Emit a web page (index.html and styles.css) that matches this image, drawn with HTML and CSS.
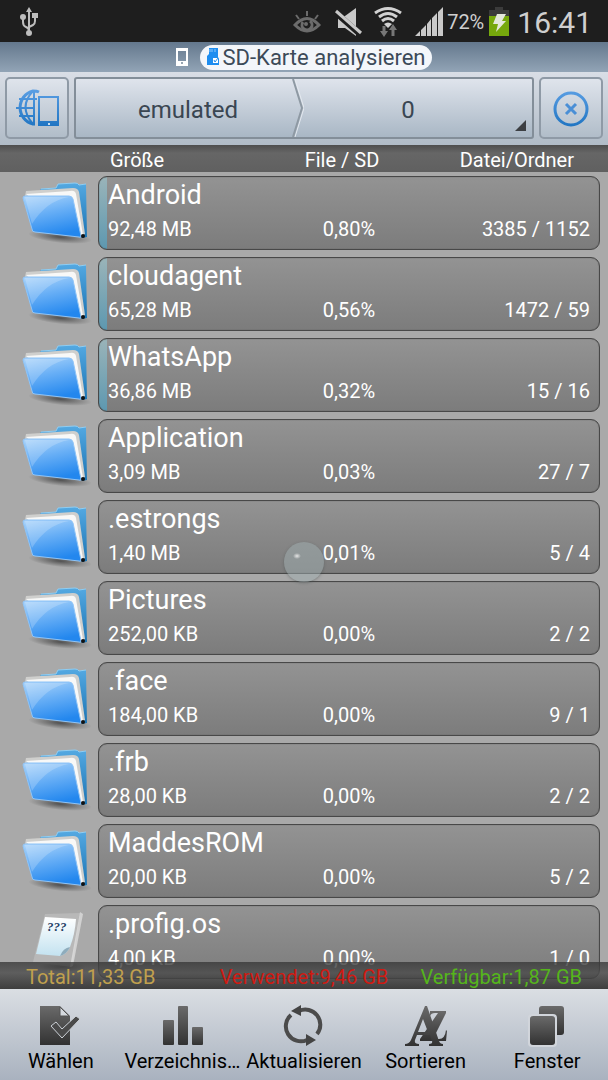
FILE: index.html
```
<!DOCTYPE html>
<html lang="de">

<head>
  <meta charset="UTF-8" />
  <meta name="viewport" content="width=device-width, initial-scale=1.0" />
  <title>SD-Karte analysieren</title>
  <link rel="stylesheet" href="styles.css">
</head>

<body>
  <!-- shared icons and gradients -->
  <svg class="defs" aria-hidden="true">
    <defs>
      <linearGradient id="front" x1="0.1" y1="0" x2="0.4" y2="1">
        <stop offset="0" stop-color="#a9d3fa" />
        <stop offset="0.45" stop-color="#68aff6" />
        <stop offset="1" stop-color="#2387ee" />
      </linearGradient>
      <linearGradient id="back" x1="0" y1="0" x2="0" y2="1">
        <stop offset="0" stop-color="#54a9e2" />
        <stop offset="1" stop-color="#1b74b4" />
      </linearGradient>
      <linearGradient id="dark" x1="0" y1="0" x2="0" y2="1">
        <stop offset="0" stop-color="#6a6a6a" />
        <stop offset="1" stop-color="#323232" />
      </linearGradient>
      <linearGradient id="blue" x1="0" y1="0" x2="0" y2="38" gradientUnits="userSpaceOnUse">
        <stop offset="0" stop-color="#5b9fe4" />
        <stop offset="1" stop-color="#1f74c2" />
      </linearGradient>
      <linearGradient id="page" x1="0" y1="0" x2="0" y2="1">
        <stop offset="0" stop-color="#ffffff" />
        <stop offset="1" stop-color="#c3e2f0" />
      </linearGradient>
      <radialGradient id="shade">
        <stop offset="0" stop-color="#333" stop-opacity="0.75" />
        <stop offset="1" stop-color="#333" stop-opacity="0" />
      </radialGradient>
    </defs>
    <symbol id="folder" viewBox="0 0 70 66">
      <ellipse cx="38" cy="57" rx="32" ry="6" fill="url(#shade)" transform="rotate(6 38 57)" />
      <path d="M18 9 L34 8 L36 4 L53 3 Q56 3 57 5 L64 4 L65 57 L60 58 Z" fill="url(#back)" />
      <path d="M19 9 L34 8 L36 4 L53 3 Q56 3 57 5 L64 4" fill="none" stroke="#8fcdf2" />
      <path d="M3 16 L4 11 L51 8 Q56 8 57 12 L63 54 L59 57 Z" fill="#cfcfcd" />
      <path d="M4 14 L48 11 Q53 10 54 14 L61 55 L56 56 Z" fill="#f8f8f7" />
      <path d="M3 16 L47 16 Q50 16 51 19 L59 56 Q59 58 57 57 L13 52 Q10 52 10 49 L1 18 Q1 16 3 16 Z" fill="url(#front)" stroke="#8fc4f7" />
      <path d="M3 17 L47 17 Q24 21 10 44 Z" fill="#fff" opacity="0.2" />
      <circle cx="61" cy="56" r="2" fill="#111" />
    </symbol>
    <symbol id="unknown" viewBox="0 0 70 66">
      <ellipse cx="40" cy="58" rx="24" ry="5" fill="url(#shade)" />
      <path d="M23 5 L58 4 L50 58 L11 53 Z" fill="#d5d5d5" opacity="0.35" />
      <path d="M58 3 L61 5 L51 57 L48 58 Z" fill="#e2e2e2" opacity="0.7" />
      <path d="M23 8 L54 10 Q53 25 48 38 Q45 45 38 47 L14 45 Z" fill="url(#page)" />
      <path d="M48 38 Q41 39 38 47 Q45 45 48 38 Z" fill="#8eacbc" />
      <text x="25" y="22" class="marks">???</text>
    </symbol>
  </svg>

  <div class="status-bar">
    <svg class="usb" width="20" height="32" viewBox="0 0 20 32" fill="none" stroke="#bdbdbd" stroke-width="2">
      <path d="M11 27 V5 M11 25 Q11 22 8 21 Q5 20 5 16 V11 M11 21 L15 19 Q17 18 17 15 V10" />
      <g fill="#bdbdbd" stroke="none">
        <path d="M11 1 L14 6 H8 Z" />
        <circle cx="5" cy="11" r="3" />
        <path d="M14 7 H20 V12 H14 Z" />
        <circle cx="11" cy="27" r="3" />
      </g>
    </svg>
    <svg width="28" height="32" viewBox="0 0 28 32" fill="none" stroke="#6c6c6c" stroke-width="3">
      <path d="M2 19 Q14 6 26 19 Q14 31 2 19 Z" />
      <path d="M10 16 A5 5 0 1 0 17 15" />
      <circle cx="13" cy="18" r="2" fill="#6c6c6c" stroke="none" />
      <path d="M3 9 L6 13 M14 5 V10 M25 9 L22 13" stroke-width="2" />
    </svg>
    <svg class="mute" width="28" height="32" viewBox="0 0 28 32">
      <path d="M3 10 H10 L21 2 V30 L10 22 H3 Z" fill="#c9c9c9" />
      <path d="M0 6 L26 29" stroke="#1e1e1e" stroke-width="6" />
      <path d="M1 5 L26 27" stroke="#c9c9c9" stroke-width="3" />
    </svg>
    <svg class="wifi" width="30" height="32" viewBox="0 0 30 32" fill="none" stroke="#d2d2d2" stroke-width="3">
      <path d="M2 7 Q15 -2 28 7 M6 11 Q15 4 24 11 M9 15 Q15 10 21 15" />
      <path d="M11 18 Q15 15 19 18 L15 22 Z" fill="#d2d2d2" stroke="none" />
      <path d="M11 20 V27 M20 30 V23" stroke="#777" />
      <path d="M7 25 H15 L11 31 Z M16 24 H24 L20 18 Z" fill="#777" stroke="none" />
    </svg>
    <svg class="signal" width="28" height="32" viewBox="0 0 28 32" fill="#c9c9c9">
      <path d="M0 30 L5 25 V30 Z M6 24 L11 19 V30 H6 Z M12 18 L16 13 V30 H12 Z M17 12 L22 7 V30 H17 Z M23 6 L28 1 V30 H23 Z" />
    </svg>
    <span class="percent">72%</span>
    <svg width="20" height="32" viewBox="0 0 20 32">
      <path d="M6 1 H14 V4 H20 V10 H0 V4 H6 Z" fill="#3b3b3b" />
      <path d="M0 10 H20 V30 H0 Z" fill="#76a80d" />
      <path d="M8 8 H17 L13 15 H17 L7 26 L9 18 H4 Z" fill="#e4e8dc" />
    </svg>
    <time class="clock">16:41</time>
  </div>

  <header class="title-bar">
    <svg width="12" height="20" viewBox="0 0 12 20">
      <path fill-rule="evenodd" d="M0 1 H12 V19 H0 Z M2 4 V14 H10 V4 Z" fill="#fff" />
      <circle cx="6" cy="16" r="1" fill="#778899" />
    </svg>
    <h1>
      <svg width="14" height="20" viewBox="0 0 14 20">
        <path d="M3 1 H12 V10 L13 12 V18 H1 V9 L3 7 Z" fill="#1d8df0" />
        <path d="M4 2 V5 M6 2 V5 M9 2 V5" stroke="#8dc7fa" />
        <path d="M7 11 H12 V16 H7 Z" fill="#fff" />
        <path d="M8 13 L9 15 L12 11" fill="none" stroke="#1d8df0" />
      </svg>
      SD-Karte analysieren
    </h1>
  </header>

  <nav class="toolbar">
    <button class="tool" aria-label="Speicher wählen">
      <svg width="44" height="38" viewBox="0 0 44 38" fill="none" stroke="url(#blue)" stroke-width="2">
        <path d="M24 3 Q22 2 18 2 A17 17 0 0 0 18 35 H20" stroke-width="3" />
        <path d="M18 2 Q3 18 18 35 M19 3 V35 M4 10 H22 M1 19 H20 M4 27 H20" />
        <path d="M24 8 H43 V36 H24 Z" />
        <path d="M24 33 H43 V36 H24 Z" fill="url(#blue)" />
        <circle cx="34" cy="35" r="1" fill="#fff" stroke="none" />
      </svg>
    </button>
    <div class="path">
      <a href="#">emulated</a>
      <svg class="chevron" width="12" height="60" viewBox="0 0 12 60" preserveAspectRatio="none" fill="none">
        <path d="M3 0 L12 30 L3 60" stroke="#e3e9ef" />
        <path d="M1 0 L10 30 L1 60" stroke="#8e99a3" stroke-width="2" />
      </svg>
      <a href="#">0</a>
      <span class="corner"></span>
    </div>
    <button class="tool" aria-label="Schließen">
      <svg width="38" height="38" viewBox="0 0 38 38" fill="none" stroke="url(#blue)" stroke-width="3">
        <circle cx="19" cy="20" r="16" />
        <path d="M14 15 L24 25 M24 15 L14 25" stroke="#4a8fd6" />
      </svg>
    </button>
  </nav>

  <main>
    <table>
      <thead>
        <tr>
          <th>Größe</th>
          <th>File / SD</th>
          <th>Datei/Ordner</th>
        </tr>
      </thead>
      <tbody>
        <tr class="used">
          <td class="icon"><svg><use href="#folder" /></svg></td>
          <th class="name">Android</th>
          <td>92,48 MB</td>
          <td>0,80%</td>
          <td>3385 / 1152</td>
        </tr>
        <tr class="used">
          <td class="icon"><svg><use href="#folder" /></svg></td>
          <th class="name">cloudagent</th>
          <td>65,28 MB</td>
          <td>0,56%</td>
          <td>1472 / 59</td>
        </tr>
        <tr class="used">
          <td class="icon"><svg><use href="#folder" /></svg></td>
          <th class="name">WhatsApp</th>
          <td>36,86 MB</td>
          <td>0,32%</td>
          <td>15 / 16</td>
        </tr>
        <tr>
          <td class="icon"><svg><use href="#folder" /></svg></td>
          <th class="name">Application</th>
          <td>3,09 MB</td>
          <td>0,03%</td>
          <td>27 / 7</td>
        </tr>
        <tr>
          <td class="icon"><svg><use href="#folder" /></svg></td>
          <th class="name">.estrongs</th>
          <td>1,40 MB</td>
          <td>0,01%</td>
          <td>5 / 4</td>
        </tr>
        <tr>
          <td class="icon"><svg><use href="#folder" /></svg></td>
          <th class="name">Pictures</th>
          <td>252,00 KB</td>
          <td>0,00%</td>
          <td>2 / 2</td>
        </tr>
        <tr>
          <td class="icon"><svg><use href="#folder" /></svg></td>
          <th class="name">.face</th>
          <td>184,00 KB</td>
          <td>0,00%</td>
          <td>9 / 1</td>
        </tr>
        <tr>
          <td class="icon"><svg><use href="#folder" /></svg></td>
          <th class="name">.frb</th>
          <td>28,00 KB</td>
          <td>0,00%</td>
          <td>2 / 2</td>
        </tr>
        <tr>
          <td class="icon"><svg><use href="#folder" /></svg></td>
          <th class="name">MaddesROM</th>
          <td>20,00 KB</td>
          <td>0,00%</td>
          <td>5 / 2</td>
        </tr>
        <tr>
          <td class="icon"><svg><use href="#unknown" /></svg></td>
          <th class="name">.profig.os</th>
          <td>4,00 KB</td>
          <td>0,00%</td>
          <td>1 / 0</td>
        </tr>
      </tbody>
    </table>
    <span class="touch-dot"></span>
    <div class="summary">
      <span class="total">Total:11,33 GB</span>
      <span class="taken">Verwendet:9,46 GB</span>
      <span class="free">Verfügbar:1,87 GB</span>
    </div>
  </main>

  <footer class="actions">
    <button>
      <svg width="42" height="42" viewBox="0 0 42 42">
        <path d="M0 1 H20 L30 11 V40 H0 Z" fill="url(#dark)" />
        <path d="M20 2 V11 H29 Z" fill="#d5d9de" stroke="#555" />
        <path d="M11 21 L16 17 L22 24 L36 11 L40 14 L22 33 Z" fill="#4a4a4a" stroke="#ccd1d7" stroke-width="1" />
      </svg>
      <span>Wählen</span>
    </button>
    <button>
      <svg width="42" height="42" viewBox="0 0 42 42" fill="url(#dark)">
        <rect x="2" y="15" width="11" height="25" rx="1" />
        <rect x="17" y="1" width="10" height="39" rx="1" />
        <rect x="31" y="22" width="11" height="18" rx="1" />
      </svg>
      <span>Verzeichnis…</span>
    </button>
    <button>
      <svg width="42" height="42" viewBox="0 0 42 42" fill="none" stroke="#4b4b4b" stroke-width="4">
        <path d="M8 10 A15 15 0 0 0 24 35 M16 6 A15 15 0 0 1 34 29" />
        <path d="M8 6 L18 0 V11 Z M33 35 L23 29 V41 Z" fill="#444" stroke="none" />
      </svg>
      <span>Aktualisieren</span>
    </button>
    <button>
      <svg width="42" height="42" viewBox="0 0 42 42" fill="url(#dark)">
        <path d="M25 6 H41 V8 L28 34 H34 Q40 34 41 25 L42 26 L41 36 H15 V34 L33 8 H30 Q26 8 25 11 Z" />
        <path d="M20 1 H22 L34 36 Q35 39 38 39 V41 H24 V39 Q28 39 27 36 L25 30 H12 L10 35 Q9 39 14 39 V41 H0 V39 Q4 39 6 35 Z M13 27 H23 L18 14 Z" fill-rule="evenodd" />
      </svg>
      <span>Sortieren</span>
    </button>
    <button>
      <svg width="42" height="42" viewBox="0 0 42 42" fill="url(#dark)">
        <rect x="13" y="1" width="25" height="29" rx="3" />
        <rect x="2" y="9" width="29" height="33" rx="4" fill="#d1d5db" />
        <rect x="4" y="11" width="25" height="29" rx="3" />
      </svg>
      <span>Fenster</span>
    </button>
  </footer>
</body>

</html>
```
FILE: styles.css
```
* {
  box-sizing: border-box;
}

body {
  display: flex;
  flex-direction: column;
  height: 100vh;
  margin: 0;
  font-family: Roboto, "Liberation Sans", sans-serif;
  font-size: 20px;
  background: #a9a9a9;
  overflow: hidden;
}

svg {
  display: block;
  flex: none;
}

.defs {
  position: absolute;
  width: 0;
  height: 0;
}

button {
  font: inherit;
  cursor: pointer;
}

/* status bar */
.status-bar {
  display: flex;
  align-items: center;
  flex: none;
  height: 42px;
  padding: 2px 16px 0 18px;
  background: #1e1e1e;
  color: #cfcfcf;
}

.usb {
  margin-right: auto;
}

.mute {
  margin: 0 10px 0 14px;
}

.signal {
  margin: 0 4px 0 12px;
}

.percent {
  margin-right: 5px;
}

.clock {
  margin-left: 8px;
  font-size: 30px;
}

/* title */
.title-bar {
  display: flex;
  align-items: center;
  justify-content: center;
  flex: none;
  gap: 12px;
  height: 30px;
  background: linear-gradient(#64788d, #92a4b6);
}

h1 {
  display: flex;
  align-items: center;
  gap: 3px;
  height: 25px;
  margin: 0;
  padding: 0 7px 0 6px;
  border-radius: 13px;
  background: #f3f6fa;
  color: #3c4a58;
  font-size: 22px;
  font-weight: normal;
}

/* path toolbar */
.toolbar {
  display: flex;
  flex: none;
  gap: 5px;
  height: 73px;
  padding: 5px 5px 6px;
  background: linear-gradient(#d9dee6, #b0bbc7);
}

.tool {
  display: flex;
  align-items: center;
  justify-content: center;
  width: 64px;
  padding: 0;
  border: 2px solid #8f9aa6;
  border-radius: 5px;
  background: linear-gradient(#dfe4ec, #b1bdc9);
}

.path {
  position: relative;
  display: flex;
  flex: 1;
  padding: 0 20px 0 8px;
  border: 2px solid #838e99;
  border-radius: 3px;
  background: linear-gradient(#dfe4ec, #a9b7c5);
}

.path a {
  display: flex;
  align-items: center;
  justify-content: center;
  flex: 1;
  padding-top: 3px;
  color: #3a4652;
  font-size: 24px;
  text-decoration: none;
}

.chevron {
  height: 100%;
}

.corner {
  position: absolute;
  right: 6px;
  bottom: 6px;
  border-left: 11px solid transparent;
  border-bottom: 11px solid #3c3f43;
}

/* file list */
main {
  position: relative;
  flex: 1;
  min-height: 0;
  overflow: hidden;
}

table,
thead,
tbody {
  display: block;
}

th,
td {
  padding: 0;
  font-weight: normal;
  text-align: left;
}

tr {
  display: grid;
  grid-template-columns: 98px 1fr 1fr 1fr;
}

thead tr {
  grid-template-columns: 1fr 1fr 1fr;
  align-items: center;
  height: 27px;
  padding: 3px 34px 0 110px;
  background: linear-gradient(#4e4e4e, #666 30%, #606060);
  color: #fff;
}

thead th:nth-child(2) {
  text-align: center;
}

thead th:nth-child(3) {
  text-align: right;
}

tbody {
  padding-top: 4px;
}

tbody tr {
  grid-template-rows: 38px 36px;
  margin-bottom: 7px;
  padding-right: 8px;
  color: #fff;
}

/* the card behind the four text cells */
tbody tr::before {
  content: "";
  grid-area: 1 / 2 / 3 / 5;
  border: 1px solid #484848;
  border-radius: 9px;
  background: linear-gradient(#939393, #7c7c7c);
  box-shadow: inset 0 0 1px #484848;
}

tbody tr.used::before {
  background:
    linear-gradient(#9ab4b9, #5d98b0) left / 8px 100% no-repeat,
    linear-gradient(#939393, #7c7c7c);
}

tbody td {
  grid-row: 2;
  line-height: 30px;
}

tbody .icon {
  grid-area: 1 / 1 / 3 / 2;
}

.icon svg {
  width: 70px;
  height: 66px;
  margin: 4px 0 0 22px;
}

tbody .name {
  grid-area: 1 / 2 / 2 / 5;
  padding-left: 10px;
  font-size: 27px;
  line-height: 38px;
}

tbody td:nth-child(3) {
  grid-column: 2;
  padding-left: 10px;
}

tbody td:nth-child(4) {
  grid-column: 3;
  text-align: center;
}

tbody td:nth-child(5) {
  grid-column: 4;
  padding-right: 10px;
  text-align: right;
}

.marks {
  fill: #1f3f66;
  font-family: "Liberation Serif", serif;
  font-size: 13px;
  font-style: italic;
  font-weight: bold;
}

/* touch point indicator */
.touch-dot {
  position: absolute;
  top: 397px;
  left: 50%;
  width: 40px;
  height: 40px;
  margin-left: -20px;
  border-radius: 50%;
  background:
    radial-gradient(ellipse 4px 3px at 13px 14px, #e6e6e6, transparent),
    rgba(160, 174, 176, 0.5);
  box-shadow: 0 1px 3px rgba(60, 70, 70, 0.4);
}

.summary {
  position: absolute;
  right: 0;
  bottom: 0;
  left: 0;
  display: grid;
  grid-template-columns: 1fr auto 1fr;
  padding: 3px 26px 0;
  background: linear-gradient(rgba(55, 55, 55, 0.8), rgba(75, 75, 75, 0.8) 40%, rgba(50, 50, 50, 0.9));
  line-height: 24px;
}

.total {
  color: #c0a04e;
}

.taken {
  color: #cf1a12;
}

.free {
  color: #55b51b;
  text-align: right;
}

/* bottom actions */
.actions {
  display: flex;
  flex: none;
  height: 91px;
  background: linear-gradient(#dadee3, #a9b2bf);
}

.actions button {
  display: flex;
  flex: 1 1 0;
  flex-direction: column;
  align-items: center;
  gap: 2px;
  min-width: 0;
  padding: 16px 0 0;
  border: none;
  background: none;
  color: #000;
  line-height: 24px;
}

.actions span {
  white-space: nowrap;
}
```
